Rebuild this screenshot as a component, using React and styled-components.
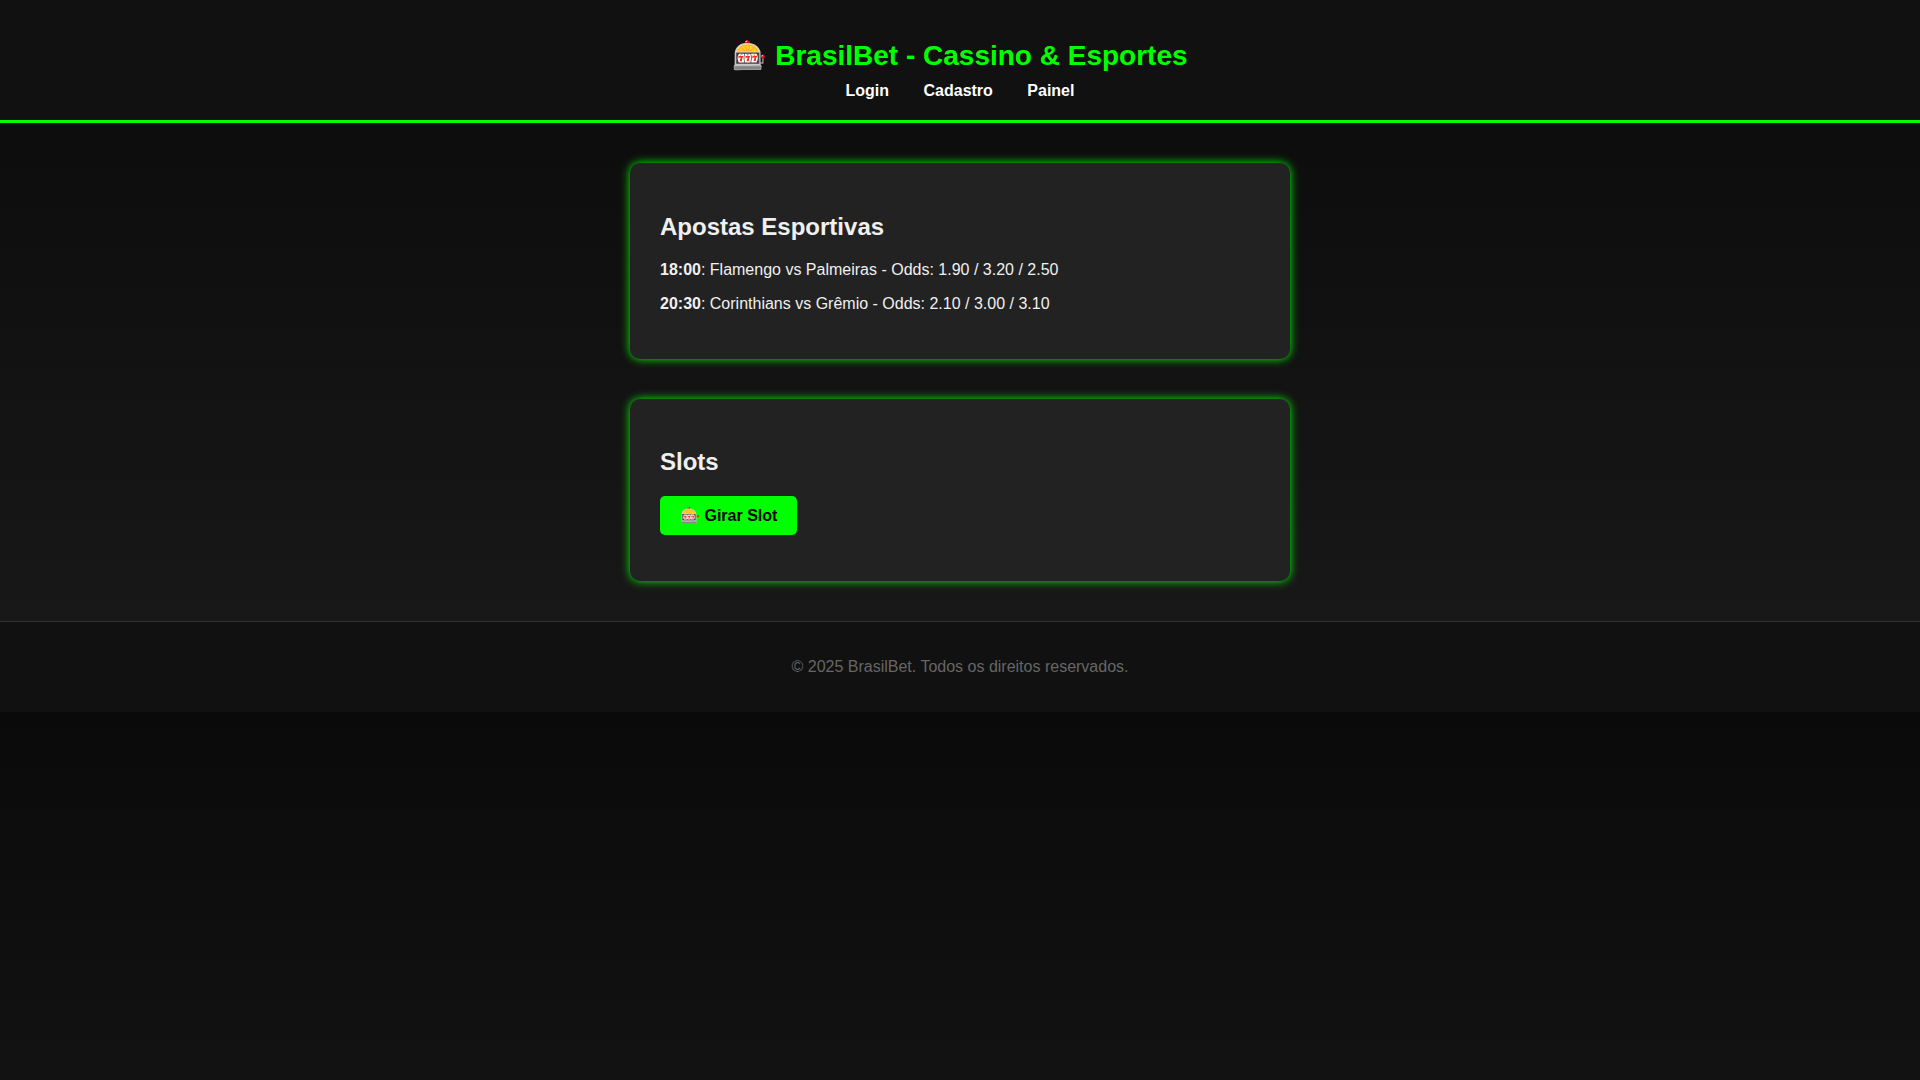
import React, { useState } from 'react'
import styled, { createGlobalStyle } from 'styled-components'

const GlobalStyle = createGlobalStyle`
  body {
    margin: 0;
    padding: 0;
    font-family: Arial, 'Liberation Sans', sans-serif;
    background: linear-gradient(to bottom, #0a0a0a, #1a1a1a);
    color: #f0f0f0;
  }
`

const Header = styled.header`
  background-color: #111;
  padding: 20px;
  text-align: center;
  border-bottom: 3px solid #0f0;
`

const Title = styled.h1`
  margin-bottom: 10px;
  font-size: 28px;
  color: #0f0;
`

const NavLink = styled.a`
  margin: 0 15px;
  color: #fff;
  font-weight: bold;
  text-decoration: none;
`

const Card = styled.section`
  max-width: 600px;
  margin: 40px auto;
  padding: 30px;
  border-radius: 10px;
  background-color: #222;
  box-shadow: 0 0 10px #0f0;
`

const Button = styled.button`
  padding: 10px 20px;
  border: none;
  border-radius: 5px;
  background-color: #0f0;
  color: #000;
  font-family: inherit;
  font-size: 16px;
  font-weight: bold;
  cursor: pointer;
`

const Footer = styled.footer`
  padding: 20px;
  border-top: 1px solid #333;
  background-color: #111;
  color: #666;
  text-align: center;
`

const links = ['Login', 'Cadastro', 'Painel']

const matches = [
  { time: '18:00', teams: 'Flamengo vs Palmeiras', odds: '1.90 / 3.20 / 2.50' },
  { time: '20:30', teams: 'Corinthians vs Grêmio', odds: '2.10 / 3.00 / 3.10' },
]

const symbols = ['🍒', '🍋', '🔔', '💎']

const spin = () =>
  Array.from(
    { length: 3 },
    () => symbols[Math.floor(Math.random() * symbols.length)]
  ).join(' ')

const App = () => {
  const [result, setResult] = useState('')

  return (
    <>
      <GlobalStyle />
      <Header>
        <Title>🎰 BrasilBet - Cassino &amp; Esportes</Title>
        <nav>
          {links.map(link => (
            <React.Fragment key={link}>
              <NavLink href="#">{link}</NavLink>{' '}
            </React.Fragment>
          ))}
        </nav>
      </Header>
      <main>
        <Card>
          <h2>Apostas Esportivas</h2>
          {matches.map(match => (
            <p key={match.time}>
              <strong>{match.time}</strong>: {match.teams} - Odds: {match.odds}
            </p>
          ))}
        </Card>
        <Card>
          <h2>Slots</h2>
          <Button type="button" onClick={() => setResult(spin())}>
            🎰 Girar Slot
          </Button>
          <p>{result}</p>
        </Card>
      </main>
      <Footer>
        <p>© 2025 BrasilBet. Todos os direitos reservados.</p>
      </Footer>
    </>
  )
}

export default App
